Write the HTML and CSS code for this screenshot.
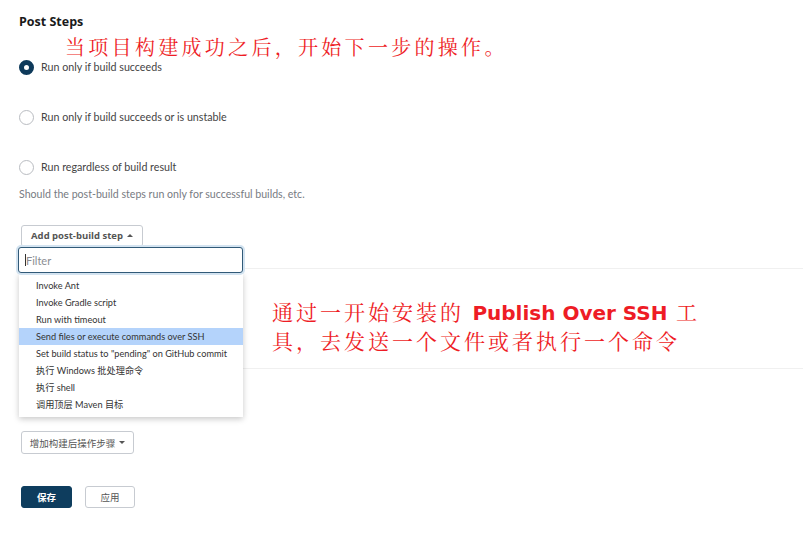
FILE: index.html
```html
<!DOCTYPE html>
<html lang="zh-CN">
<head>
<meta charset="utf-8">
<title>Post Steps</title>
<link rel="stylesheet" href="styles.css">
</head>
<body>
<main class="page">
  <h2 class="section-title">Post Steps</h2>

  <div class="radio-group">
    <label class="radio-row">
      <span class="radio radio-checked"></span>
      <span class="radio-label">Run only if build succeeds</span>
    </label>
    <label class="radio-row">
      <span class="radio"></span>
      <span class="radio-label">Run only if build succeeds or is unstable</span>
    </label>
    <label class="radio-row">
      <span class="radio"></span>
      <span class="radio-label">Run regardless of build result</span>
    </label>
  </div>

  <p class="help">Should the post-build steps run only for successful builds, etc.</p>

  <div class="dropdown-wrap">
    <button class="btn btn-add">Add post-build step <span class="caret-up"></span></button>
    <div class="dropdown">
      <div class="filter"><span class="filter-caret"></span><span class="filter-ph">Filter</span></div>
      <ul class="menu">
        <li>Invoke Ant</li>
        <li>Invoke Gradle script</li>
        <li>Run with timeout</li>
        <li class="active">Send files or execute commands over SSH</li>
        <li>Set build status to "pending" on GitHub commit</li>
        <li>执行 Windows 批处理命令</li>
        <li>执行 shell</li>
        <li>调用顶层 Maven 目标</li>
      </ul>
    </div>
  </div>

  <section class="empty-section"></section>

  <button class="btn btn-add2">增加构建后操作步骤 <span class="caret-down"></span></button>

  <div class="actions">
    <button class="btn btn-primary">保存</button>
    <button class="btn btn-secondary">应用</button>
  </div>

  <div class="note note-1">当项目构建成功之后，开始下一步的操作。</div>
  <div class="note note-2">通过一开始安装的 <b class="note-en">Publish Over SSH</b> 工<br>具，去发送一个文件或者执行一个命令</div>
</main>
</body>
</html>
```

FILE: styles.css
```css
* { box-sizing: border-box; }
html, body { margin: 0; padding: 0; background: #fff; }
body {
  font-family: "Open Sans", "Noto Sans", "Noto Sans CJK SC", sans-serif;
  color: #333;
  width: 803px;
  height: 533px;
  overflow: hidden;
}
.page {
  position: relative;
  padding: 14px 0 0 19px;
  height: 533px;
}
.section-title {
  margin: 0;
  font-size: 12.5px;
  line-height: 16px;
  font-weight: 700;
  color: #1a1a1a;
}
.radio-group {
  display: flex;
  flex-direction: column;
  gap: 35px;
  margin-top: 30px;
}
.radio-row {
  display: flex;
  align-items: center;
  gap: 7px;
  height: 15px;
}
.radio {
  width: 15px;
  height: 15px;
  border-radius: 50%;
  border: 1px solid #b9bcc1;
  background: #fff;
  flex: none;
}
.radio-checked {
  border: 5px solid #0e3a5b;
  background: #fff;
}
.radio-label {
  font-family: "Lato", "Noto Sans CJK SC", sans-serif;
  font-size: 10.7px;
  color: #444;
  position: relative;
  top: -1px;
}
.help {
  margin: 12px 0 0;
  font-family: "Lato", "Noto Sans CJK SC", sans-serif;
  font-size: 10.6px;
  line-height: 14px;
  color: #777b82;
}
.btn {
  font-family: "Open Sans", "Noto Sans", "Noto Sans CJK SC", sans-serif;
  background: #fff;
  border: 1px solid #c7cbd1;
  border-radius: 3px;
  cursor: pointer;
  display: inline-flex;
  align-items: center;
  justify-content: center;
  padding: 0;
}
.dropdown-wrap {
  position: relative;
  margin-top: 21px;
  height: 25px;
}
.btn-add {
  margin-left: 2px;
  width: 122px;
  height: 22px;
  font-size: 9.5px;
  font-weight: 700;
  color: #555;
  gap: 4px;
}
.caret-up {
  width: 0; height: 0;
  border-left: 3px solid transparent;
  border-right: 3px solid transparent;
  border-bottom: 3px solid #555;
}
.caret-down {
  width: 0; height: 0;
  border-left: 3px solid transparent;
  border-right: 3px solid transparent;
  border-top: 3px solid #555;
}
.dropdown {
  position: absolute;
  left: -1px;
  top: 25px;
  width: 225px;
  z-index: 5;
}
.filter {
  height: 26px;
  border: 1px solid #315a78;
  border-radius: 3px;
  box-shadow: 0 0 0 2px #d3e3f0;
  background: #fff;
  display: flex;
  align-items: center;
  padding-left: 6px;
  position: relative;
  z-index: 2;
}
.filter-caret {
  width: 1px;
  height: 12px;
  background: #333;
}
.filter-ph {
  font-family: "Lato", sans-serif;
  font-size: 11px;
  color: #8a8d92;
}
.menu {
  list-style: none;
  margin: 0 0 0 1px;
  padding: 4px 0;
  background: #fff;
  box-shadow: 0 2px 6px rgba(0,0,0,0.22);
  width: 224px;
}
.menu li {
  height: 17px;
  line-height: 17px;
  padding-left: 17px;
  font-size: 9.2px;
  color: #333;
  font-family: "Lato", "Noto Sans CJK SC", sans-serif;
  white-space: nowrap;
}
.menu li.active { background: #b4d3fb; }
.empty-section {
  margin-top: 21px;
  margin-left: 40px;
  height: 101px;
  border-top: 1px solid #f0f0f0;
  border-bottom: 1px solid #f0f0f0;
}
.btn-add2 {
  margin-top: 62px;
  margin-left: 2px;
  width: 113px;
  height: 23px;
  font-size: 9.5px;
  color: #555;
  gap: 4px;
}
.actions {
  display: flex;
  gap: 13px;
  margin-top: 32px;
  margin-left: 2px;
}
.btn-primary {
  width: 51px;
  height: 22px;
  background: #0e3d5e;
  border-color: #0e3d5e;
  color: #fff;
  font-size: 9.5px;
  font-weight: 700;
}
.btn-secondary {
  width: 50px;
  height: 22px;
  color: #555;
  font-size: 9.5px;
}
.note {
  position: absolute;
  color: #ee1c25;
  font-family: "Noto Serif CJK SC", "Noto Sans CJK SC", serif;
  font-weight: 400;
  white-space: nowrap;
}
.note-1 {
  left: 65px;
  top: 34px;
  font-size: 20px;
  letter-spacing: 3.3px;
  line-height: 26px;
}
.note-2 {
  left: 272px;
  top: 298px;
  font-size: 21px;
  letter-spacing: 3px;
  line-height: 27px;
}
.note-en {
  font-family: "DejaVu Sans", Verdana, sans-serif;
  font-weight: 700;
  font-size: 20px;
  letter-spacing: 0;
}
```
